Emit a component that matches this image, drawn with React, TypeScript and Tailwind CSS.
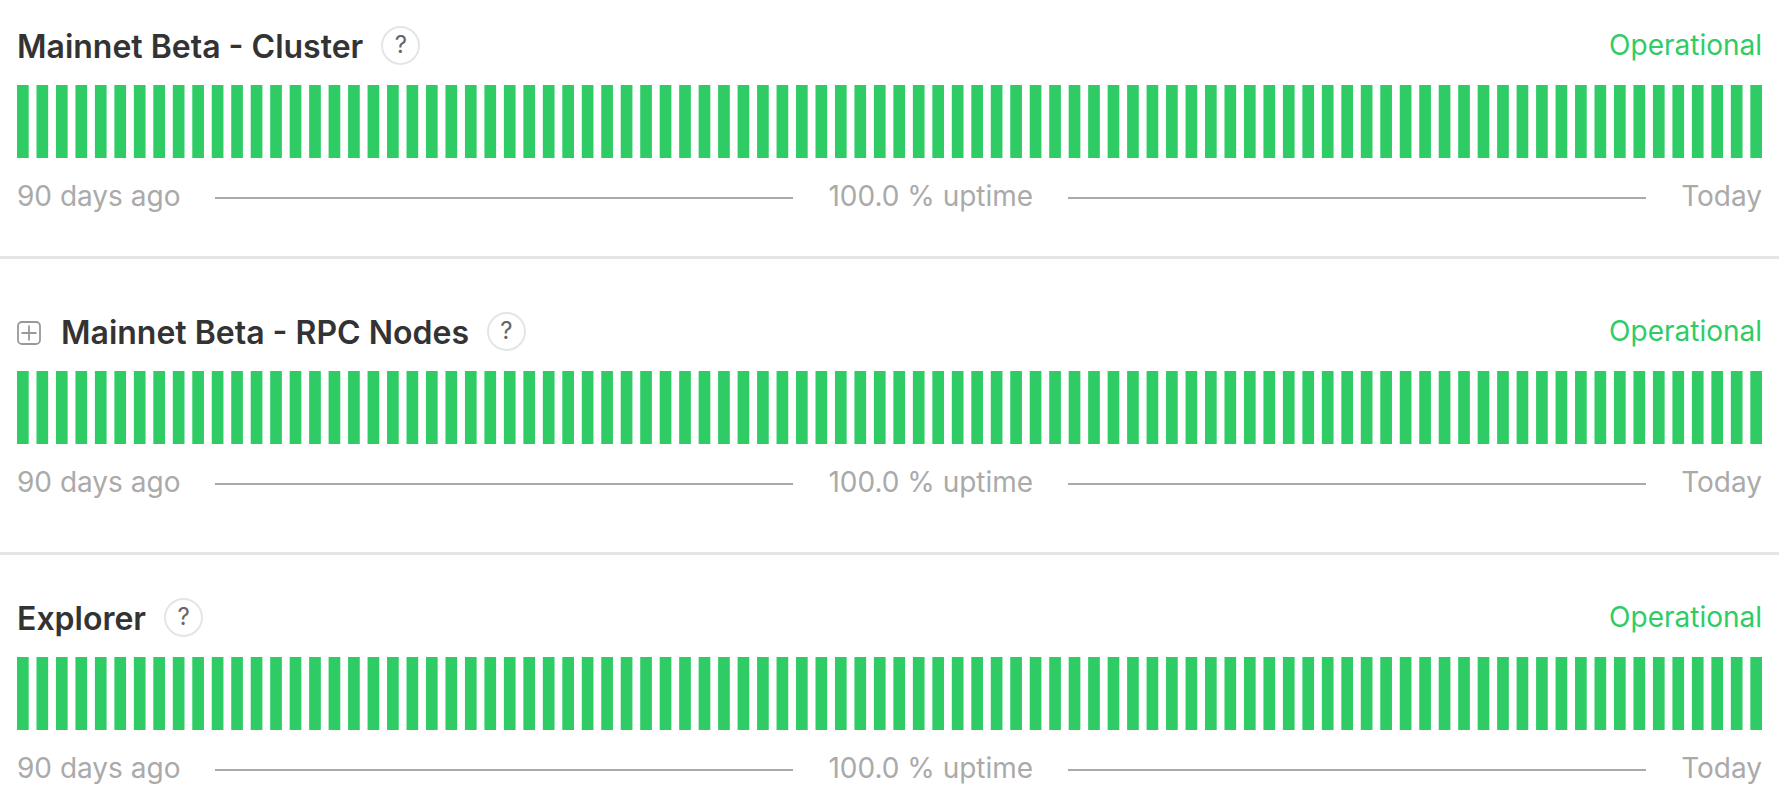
import clsx from "clsx";

interface Component {
  name: string;
  status: string;
  uptime: string;
  isGroup?: boolean;
}

const COMPONENTS: Component[] = [
  { name: "Mainnet Beta - Cluster", status: "Operational", uptime: "100.0" },
  { name: "Mainnet Beta - RPC Nodes", status: "Operational", uptime: "100.0", isGroup: true },
  { name: "Explorer", status: "Operational", uptime: "100.0" },
];

const DAYS = Array.from({ length: 90 }, (_, day) => day);

function ExpandButton() {
  return (
    <button type="button" aria-label="Expand group" className="mt-1 mr-5 cursor-pointer text-[#999]">
      <svg viewBox="0 0 24 24" className="w-6 h-6" fill="none" stroke="currentColor" strokeWidth="1.8">
        <rect x="1" y="1" width="22" height="22" rx="4" />
        <path d="M12 4.5v15M4.5 12h15" />
      </svg>
    </button>
  );
}

// One bar per day, 3 units wide with a 2 unit gap
function UptimeChart() {
  return (
    <svg
      viewBox="0 0 448 34"
      preserveAspectRatio="none"
      className="block w-full h-[73px] mt-5"
      fill="#2fcc66"
      role="img"
      aria-label="Uptime over the last 90 days"
    >
      {DAYS.map((day) => (
        <rect key={day} x={day * 5} y="0" width="3" height="34" />
      ))}
    </svg>
  );
}

function ComponentRow({ component, className }: { component: Component; className?: string }) {
  return (
    <section className={clsx("px-[17px]", className)}>
      {/* Header */}
      <div className="flex items-center h-10">
        {component.isGroup && <ExpandButton />}
        <h2 className="mt-1 text-[32px] leading-9 font-semibold text-[#333]">{component.name}</h2>
        <button
          type="button"
          aria-label={`About ${component.name}`}
          className="ml-[18px] flex items-center justify-center size-[39px] rounded-full border-2 border-[#e5e5e5] text-2xl text-[#666] cursor-pointer"
        >
          ?
        </button>
        <span className="ml-auto text-[28px] leading-9 text-[#2fcc66]">{component.status}</span>
      </div>

      <UptimeChart />

      {/* Legend */}
      <div className="mt-5 flex items-center gap-[35px] text-[28px] leading-9 text-[#aaa]">
        <span>90 days ago</span>
        <div className="mt-1 flex-1 h-0.5 bg-[#aaa]" />
        <span>{component.uptime} % uptime</span>
        <div className="mt-1 flex-1 h-0.5 bg-[#aaa]" />
        <span>Today</span>
      </div>
    </section>
  );
}

export default function App() {
  return (
    <main className="bg-white font-['Inter',sans-serif]">
      <ComponentRow component={COMPONENTS[0]} className="pt-[25px] pb-[42px] border-b-3 border-[#e5e5e5]" />
      <ComponentRow component={COMPONENTS[1]} className="pt-[52px] pb-[52px] border-b-3 border-[#e5e5e5]" />
      <ComponentRow component={COMPONENTS[2]} className="pt-[42px] pb-8" />
    </main>
  );
}
